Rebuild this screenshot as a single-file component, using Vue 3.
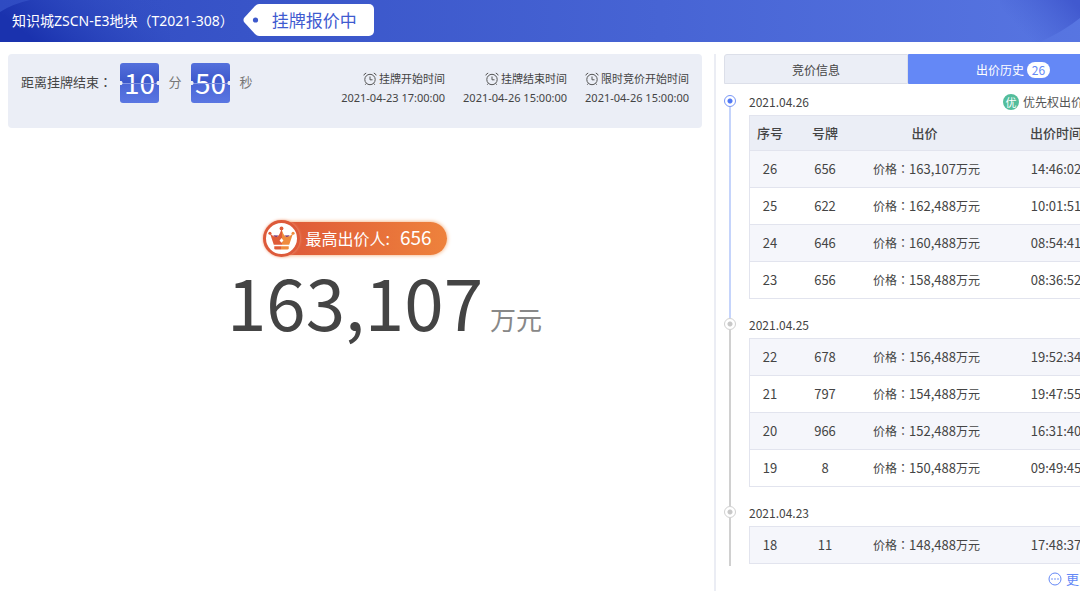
<template>
  <div class="page">
    <header class="topbar">
      <svg class="topbar-bg" viewBox="0 0 1080 42" preserveAspectRatio="none" aria-hidden="true">
        <defs>
          <linearGradient id="arcLeft" x1="0" x2="1" y1="0.3" y2="0">
            <stop offset="0" stop-color="#1a32ae" />
            <stop offset="1" stop-color="#3451c5" stop-opacity="0" />
          </linearGradient>
          <linearGradient id="arcRight" x1="0.2" x2="1" y1="0.6" y2="0.2">
            <stop offset="0" stop-color="#4560d2" stop-opacity="0" />
            <stop offset="1" stop-color="#4159cf" />
          </linearGradient>
        </defs>
        <path d="M0 12Q12 4 30 0H170V42H0Z" fill="url(#arcLeft)" />
        <path d="M1000 0H1080V18Q1064 31 1040 42H1000Z" fill="url(#arcRight)" />
      </svg>
      <h1 class="title">知识城ZSCN-E3地块（T2021-308）</h1>
      <div class="status">
        <svg class="status-tip" viewBox="0 0 16 32" aria-hidden="true">
          <path d="M16 0Q14 0 12 2L1 14Q0 16 1 18L12 30Q14 32 16 32Z" fill="#fff" />
          <circle cx="12.500" cy="16" r="2.600" fill="#3d59cc" />
        </svg>
        <span class="status-text">挂牌报价中</span>
      </div>
    </header>

    <main class="content">
      <section class="left">
        <div class="summary">
          <div class="countdown">
            <span class="countdown-label">距离挂牌结束<span class="colon">：</span></span>
            <template v-for="part in countdown" :key="part.unit">
              <span class="flip">{{ part.value }}</span>
              <span class="unit">{{ part.unit }}</span>
            </template>
          </div>
          <dl class="times">
            <div v-for="item in times" :key="item.label" class="time-item">
              <dt>
                <svg class="alarm" viewBox="0 0 14 14" aria-hidden="true">
                  <circle cx="7" cy="7.500" r="5.200" />
                  <path d="M7 4.500V7.800H9.500M.8 3.400Q1.300 1.600 3.200 1.100M10.800 1.100Q12.700 1.600 13.200 3.400M3.300 11.400L2.300 12.700M10.700 11.400L11.700 12.700" />
                </svg>
                {{ item.label }}
              </dt>
              <dd>{{ item.value }}</dd>
            </div>
          </dl>
        </div>

        <div class="stage">
          <div class="bidder">
            <span class="medal">
              <svg viewBox="0 0 28 28" aria-hidden="true">
                <defs>
                  <linearGradient id="crown">
                    <stop offset="0.5" stop-color="#df5c38" />
                    <stop offset="0.5" stop-color="#ef8b3d" />
                  </linearGradient>
                </defs>
                <path d="M5.500 10.500L11 11L8 14ZM22.500 10.500L17 11L20 14Z" fill="#7a3a78" />
                <path d="M2 8.500Q6 12.500 9.500 12.500Q12.500 10 14 4Q15.500 10 18.500 12.500Q22 12.500 26 8.500L22 20.500H6Z" fill="url(#crown)" />
                <path d="M6.500 22H21.500V24Q21.500 25.500 20 25.500H8Q6.500 25.500 6.500 24Z" fill="url(#crown)" />
                <circle cx="2" cy="8.500" r="1.600" fill="#df5c38" />
                <circle cx="14" cy="3.500" r="2" fill="#df5c38" />
                <circle cx="26" cy="8.500" r="1.600" fill="#ef8b3d" />
                <path d="M14 13.500L16 16L14 18.500L12 16Z" fill="#fff" />
              </svg>
            </span>
            <span class="bidder-label">最高出价人:</span>
            <span class="bidder-no">656</span>
          </div>
          <p class="price">163,107<span class="price-unit">万元</span></p>
        </div>
      </section>

      <aside class="right">
        <nav class="tabs">
          <button
            v-for="tab in tabs"
            :key="tab.key"
            type="button"
            class="tab"
            :class="{ active: tab.key === activeTab }"
            @click="activeTab = tab.key"
          >
            <span class="tab-label">{{ tab.label }}<span v-if="tab.count" class="count">{{ tab.count }}</span></span>
          </button>
        </nav>

        <div class="timeline">
          <section v-for="(group, i) in groups" :key="group.date" class="group" :class="{ current: i === 0 }">
            <div class="axis"><span class="dot"></span></div>
            <div class="group-body">
              <div class="group-head">
                <h2>{{ group.date }}</h2>
                <span v-if="i === 0" class="priority"><i class="priority-mark">优</i>优先权出价</span>
              </div>
              <table>
                <colgroup>
                  <col class="col-index" />
                  <col class="col-no" />
                  <col />
                  <col class="col-time" />
                </colgroup>
                <thead v-if="i === 0">
                  <tr>
                    <th>序号</th>
                    <th>号牌</th>
                    <th class="head-price">出价</th>
                    <th>出价时间</th>
                  </tr>
                </thead>
                <tbody>
                  <tr v-for="row in group.rows" :key="row[0]">
                    <td>{{ row[0] }}</td>
                    <td>{{ row[1] }}</td>
                    <td class="cell-price">价格<span class="colon">：</span><span class="num">{{ row[2] }}</span>万元</td>
                    <td>{{ row[3] }}</td>
                  </tr>
                </tbody>
              </table>
            </div>
          </section>
        </div>

        <a class="more" href="#">
          <svg viewBox="0 0 14 14" aria-hidden="true">
            <circle cx="7" cy="7" r="6" fill="none" stroke="#6488f6" />
            <circle cx="4" cy="7" r=".8" fill="#6488f6" />
            <circle cx="7" cy="7" r=".8" fill="#6488f6" />
            <circle cx="10" cy="7" r=".8" fill="#6488f6" />
          </svg>
          更多
        </a>
      </aside>
    </main>
  </div>
</template>

<script setup>
import { ref } from 'vue'

const activeTab = ref('history')

const tabs = [
  { key: 'info', label: '竞价信息' },
  { key: 'history', label: '出价历史', count: 26 }
]

const countdown = [
  { value: '10', unit: '分' },
  { value: '50', unit: '秒' }
]

const times = [
  { label: '挂牌开始时间', value: '2021-04-23 17:00:00' },
  { label: '挂牌结束时间', value: '2021-04-26 15:00:00' },
  { label: '限时竞价开始时间', value: '2021-04-26 15:00:00' }
]

// 序号, 号牌, 出价, 出价时间
const groups = [
  {
    date: '2021.04.26',
    rows: [
      [26, 656, '163,107', '14:46:02'],
      [25, 622, '162,488', '10:01:51'],
      [24, 646, '160,488', '08:54:41'],
      [23, 656, '158,488', '08:36:52']
    ]
  },
  {
    date: '2021.04.25',
    rows: [
      [22, 678, '156,488', '19:52:34'],
      [21, 797, '154,488', '19:47:55'],
      [20, 966, '152,488', '16:31:40'],
      [19, 8, '150,488', '09:49:45']
    ]
  },
  {
    date: '2021.04.23',
    rows: [
      [18, 11, '148,488', '17:48:37']
    ]
  }
]
</script>

<style>
body {
  overflow: hidden;
}
</style>

<style scoped>
.page {
  display: flex;
  flex-direction: column;
  min-width: 1100px;
  height: 100vh;
  background: #fff;
  color: #444;
  font-family: "Noto Sans CJK SC", sans-serif;
  font-size: 13px;
}
.page * {
  box-sizing: border-box;
}
h1, h2, p, dl, dd {
  margin: 0;
  font-weight: 400;
}
.colon {
  font-family: "Noto Sans CJK TC", sans-serif;
}

/* 顶部 */
.topbar {
  position: relative;
  display: flex;
  align-items: center;
  flex-shrink: 0;
  gap: 9px;
  height: 42px;
  padding: 0 12px 2px;
  background: linear-gradient(90deg, #2f4bc2 0%, #3854c8 22%, #4764d4 60%, #5876e2 100%);
  color: #fff;
}
.topbar-bg {
  position: absolute;
  top: 0;
  left: 0;
  width: 1080px;
  height: 42px;
}
.title {
  position: relative;
  font-family: "Noto Sans", "Noto Sans CJK SC", sans-serif;
  font-size: 14px;
  white-space: nowrap;
}
.status {
  position: relative;
  display: flex;
  height: 32px;
}
.status-tip {
  width: 16px;
  height: 32px;
}
.status-text {
  padding: 0 17px 0 13px;
  background: #fff;
  border-radius: 0 5px 5px 0;
  color: #3f5bd0;
  font-size: 17px;
  line-height: 31px;
}

/* 主体 */
.content {
  display: flex;
  flex: 1;
  min-height: 0;
  padding: 12px 8px 0;
}
.left {
  flex: 1;
  margin-right: 12px;
}
.summary {
  display: flex;
  justify-content: space-between;
  height: 74px;
  padding: 9px 13px;
  border-radius: 4px;
  background: #ebeef6;
}
.countdown {
  display: flex;
  align-items: center;
  height: 40px;
}
.countdown-label {
  margin-right: 8px;
  padding-bottom: 4px;
}
.flip {
  position: relative;
  width: 39px;
  height: 40px;
  border-radius: 3px;
  background: linear-gradient(#5470dc 0%, #3b57ca 50%, #4a66d6 51%, #5a76e2 100%);
  color: #fff;
  font-size: 28px;
  line-height: 38px;
  text-align: center;
}
/* 翻页牌中缝 */
.flip::after {
  content: "";
  position: absolute;
  inset: 18px 0;
  background:
    radial-gradient(circle at 0 2px, #ebeef6 2px, transparent 3px),
    radial-gradient(circle at 100% 2px, #ebeef6 2px, transparent 3px),
    linear-gradient(transparent 2px, #8296e4 2px, #8296e4 3px, transparent 3px);
}
.unit {
  width: 32px;
  padding-bottom: 4px;
  color: #777;
  text-align: center;
}
.times {
  display: flex;
  gap: 18px;
  padding-top: 6px;
  font-size: 11px;
  line-height: 19px;
  text-align: right;
}
.time-item dt {
  display: flex;
  align-items: center;
  justify-content: flex-end;
  gap: 2px;
}
.time-item dd {
  font-family: "Noto Sans", sans-serif;
}
.alarm {
  width: 14px;
  height: 14px;
  fill: none;
  stroke: #555;
  stroke-width: 1;
}

/* 当前最高价 */
.stage {
  display: flex;
  flex-direction: column;
  align-items: center;
  padding-top: 92px;
}
.bidder {
  position: relative;
  z-index: 0;
  display: flex;
  align-items: center;
  height: 37px;
  padding-right: 15px;
  color: #fff;
}
.bidder::before {
  content: "";
  position: absolute;
  inset: 2px 0 2px 8px;
  z-index: -1;
  border-radius: 17px;
  background: linear-gradient(90deg, #dd5638, #ee823c);
  box-shadow: 0 0 4px #f3a468;
}
.medal {
  display: flex;
  align-items: center;
  justify-content: center;
  width: 37px;
  height: 37px;
  margin-right: 5px;
  border: 3px solid #dd5a3a;
  border-radius: 50%;
  background: #fff;
  box-shadow: 0 0 3px #f0a080;
}
.medal svg {
  width: 27px;
  height: 27px;
}
.bidder-label {
  margin-right: 10px;
  padding-bottom: 2px;
  font-size: 16px;
}
.bidder-no {
  padding-bottom: 4px;
  font-size: 19px;
}
.price {
  position: relative;
  font-size: 71px;
  line-height: 86px;
}
.price-unit {
  position: absolute;
  top: 19px;
  left: 100%;
  padding-left: 7px;
  color: #888;
  font-size: 26px;
  white-space: nowrap;
}

/* 右侧 */
.right {
  display: flex;
  flex-direction: column;
  width: 378px;
  padding-left: 8px;
  border-left: 2px solid #ebedf4;
}
.tabs {
  display: flex;
  flex-shrink: 0;
}
.tab {
  flex: 1;
  height: 30px;
  padding: 0;
  border: 1px solid #dcdfe9;
  border-radius: 3px 0 0 0;
  background: #ebeef6;
  color: #444;
  font-family: inherit;
  font-size: 12px;
  cursor: pointer;
}
.tab.active {
  border-color: #6488f6;
  border-radius: 0 3px 0 0;
  background: #6488f6;
  color: #fff;
}
.tab-label {
  position: relative;
  padding-bottom: 2px;
}
.count {
  position: absolute;
  top: 1px;
  left: 100%;
  width: 23px;
  margin-left: 3px;
  border-radius: 8px;
  background: #fff;
  color: #6488f6;
  line-height: 16px;
}
.timeline {
  flex: 1;
  min-height: 0;
  padding-top: 7px;
  overflow: hidden;
}
.group {
  display: flex;
}
.axis {
  position: relative;
  width: 25px;
}
.axis::before {
  content: "";
  position: absolute;
  top: 16px;
  bottom: -4px;
  left: 5px;
  width: 2px;
  background: #d0d0d0;
}
.group:last-child .axis::before {
  bottom: -16px;
}
.dot {
  position: absolute;
  top: 4px;
  left: 0;
  width: 12px;
  height: 12px;
  border: 1px solid #d0d0d0;
  border-radius: 50%;
  background: radial-gradient(circle, #c8c8c8 2px, #fff 3px);
}
.current .axis::before {
  background: #c5d4fb;
}
.current .dot {
  border-color: #7896f6;
  background: radial-gradient(circle, #5078f4 2px, #fff 3px);
}
.group-body {
  flex: 1;
  padding-bottom: 15px;
}
.group-head {
  display: flex;
  align-items: center;
  justify-content: space-between;
  height: 24px;
  padding-bottom: 3px;
}
.group-head h2 {
  font-size: 12px;
}
.priority {
  display: flex;
  align-items: center;
  gap: 4px;
  height: 20px;
  padding-right: 9px;
  color: #555;
  font-size: 12px;
}
.priority-mark {
  width: 16px;
  height: 16px;
  border-radius: 50%;
  background: #53bd9b;
  color: #fff;
  font-size: 11px;
  font-style: normal;
  line-height: 16px;
  text-align: center;
}
table {
  width: 100%;
  border: 1px solid #e2e4ee;
  border-bottom: 0;
  border-spacing: 0;
  table-layout: fixed;
  text-align: center;
}
.col-index {
  width: 40px;
}
.col-no {
  width: 70px;
}
.col-time {
  width: 70px;
}
th,
td {
  padding: 0 0 2px;
  border-bottom: 1px solid #e2e4ee;
  white-space: nowrap;
}
th {
  height: 35px;
  background: #ebeef6;
  font-weight: 500;
}
td {
  height: 37px;
}
tbody tr:nth-child(odd) {
  background: #f5f6fb;
}
.head-price {
  padding-right: 32px;
}
.cell-price {
  padding-right: 28px;
  font-size: 12px;
}
.num {
  font-size: 13px;
}
.more {
  display: flex;
  align-items: center;
  align-self: flex-end;
  flex-shrink: 0;
  gap: 4px;
  height: 25px;
  color: #6488f6;
  font-size: 13px;
  text-decoration: none;
}
.more svg {
  width: 14px;
  height: 14px;
}
</style>
